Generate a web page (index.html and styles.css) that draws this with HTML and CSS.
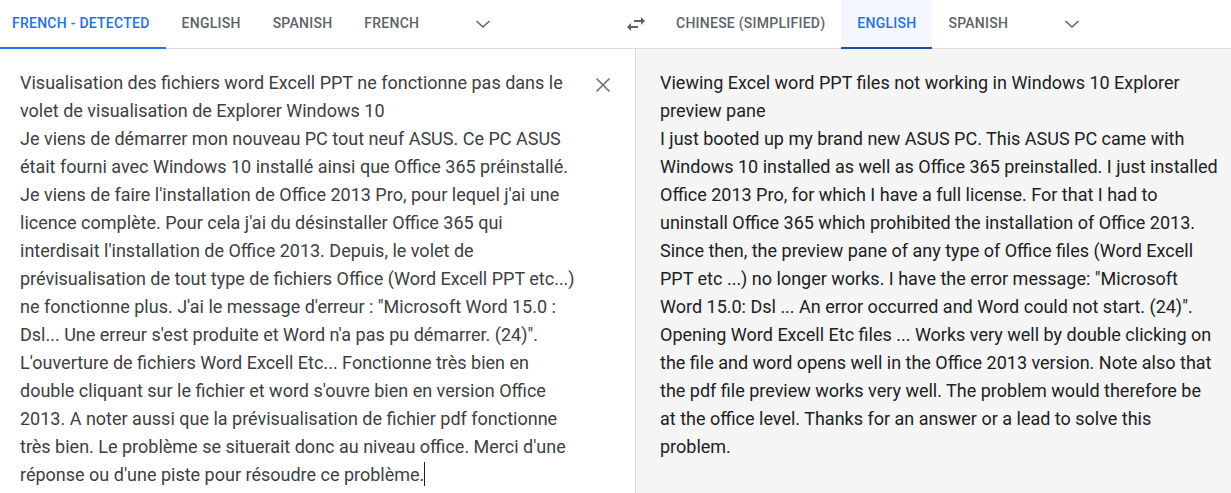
FILE: index.html
```html
<!DOCTYPE html>
<html lang="en">
<head>
    <meta charset="utf-8" />
    <title>Translate</title>
    <link rel="stylesheet" href="styles.css">
</head>
<body>
    <div class="header">
        <div class="tabs source">
            <a class="tab active first">French - detected</a>
            <a class="tab">English</a>
            <a class="tab">Spanish</a>
            <a class="tab">French</a>
            <span class="icon-btn more">
                <svg width="24" height="24" viewBox="0 0 24 24"><polyline points="5.5,9 12,15 18.5,9" fill="none" stroke="#5f6368" stroke-width="1.6"/></svg>
            </span>
        </div>
        <span class="icon-btn swap">
            <svg width="24" height="24" viewBox="0 0 24 24"><path d="M6.99 11L3 15l3.99 4v-3H14v-2H6.99v-3zM21 9l-4-4v3h-7v2h7v3l4-4z" fill="#5f6368"/></svg>
        </span>
        <div class="tabs target">
            <a class="tab">Chinese (Simplified)</a>
            <a class="tab active">English</a>
            <a class="tab">Spanish</a>
            <span class="icon-btn more">
                <svg width="24" height="24" viewBox="0 0 24 24"><polyline points="5.5,9 12,15 18.5,9" fill="none" stroke="#5f6368" stroke-width="1.6"/></svg>
            </span>
        </div>
    </div>

    <div class="panes">
        <div class="pane source-pane">
            <div class="text">Visualisation des fichiers word Excell PPT ne fonctionne pas dans le volet de visualisation de Explorer Windows 10<br>Je viens de démarrer mon nouveau PC tout neuf ASUS. Ce PC ASUS était fourni avec Windows 10 installé ainsi que Office 365 préinstallé. Je viens de faire l'installation de Office 2013 Pro, pour lequel j'ai une licence complète. Pour cela j'ai du désinstaller Office 365 qui interdisait l'installation de Office 2013. Depuis, le volet de prévisualisation de tout type de fichiers Office (Word Excell PPT etc...) ne fonctionne plus. J'ai le message d'erreur : "Microsoft Word 15.0 : Dsl... Une erreur s'est produite et Word n'a pas pu démarrer. (24)". L'ouverture de fichiers Word Excell Etc... Fonctionne très bien en double cliquant sur le fichier et word s'ouvre bien en version Office 2013. A noter aussi que la prévisualisation de fichier pdf fonctionne très bien. Le problème se situerait donc au niveau office. Merci d'une réponse ou d'une piste pour résoudre ce problème.<span class="caret"></span></div>
            <span class="clear">
                <svg width="16" height="16" viewBox="0 0 16 16"><path d="M1.5 1.5L14.5 14.5M14.5 1.5L1.5 14.5" stroke="#70757a" stroke-width="1.7"/></svg>
            </span>
        </div>
        <div class="pane target-pane">
            <div class="text">Viewing Excel word PPT files not working in Windows 10 Explorer preview pane<br>I just booted up my brand new ASUS PC. This ASUS PC came with Windows 10 installed as well as Office 365 preinstalled. I just installed Office 2013 Pro, for which I have a full license. For that I had to uninstall Office 365 which prohibited the installation of Office 2013. Since then, the preview pane of any type of Office files (Word Excell PPT etc ...) no longer works. I have the error message: "Microsoft Word 15.0: Dsl ... An error occurred and Word could not start. (24)". Opening Word Excell Etc files ... Works very well by double clicking on the file and word opens well in the Office 2013 version. Note also that the pdf file preview works very well. The problem would therefore be at the office level. Thanks for an answer or a lead to solve this problem.</div>
        </div>
    </div>
</body>
</html>
```

FILE: styles.css
```css
html, body {
    height: 100%;
}

body {
    margin: 0;
    font-family: Roboto, "Liberation Sans", Arial, sans-serif;
    display: flex;
    flex-direction: column;
    background: #fff;
}

.header {
    display: flex;
    height: 48px;
    border-bottom: 1px solid #dadce0;
}

.tabs {
    display: flex;
    align-items: stretch;
}

.tabs.source {
    width: 612px;
}

.tab {
    display: flex;
    align-items: center;
    padding: 0 16px 2px;
    font-size: 14px;
    font-weight: 500;
    letter-spacing: 0.25px;
    text-transform: uppercase;
    color: #5f6368;
    border-bottom: 2px solid transparent;
    margin-bottom: -1px;
    cursor: pointer;
}

.tab.first {
    padding-left: 12px;
}

.source .tab.active {
    color: #1a73e8;
    border-bottom-color: #1a73e8;
}

.target .tab.active {
    color: #1a73e8;
    background: #f4f8fe;
    border-bottom-color: #174ea6;
}

.icon-btn {
    width: 48px;
    display: flex;
    align-items: center;
    justify-content: center;
}

.icon-btn.more {
    margin-left: 24px;
}

.panes {
    flex: 1;
    display: flex;
}

.pane {
    display: flex;
    padding-top: 20px;
    font-size: 18px;
    line-height: 28px;
}

.source-pane {
    width: 635px;
    box-sizing: border-box;
    padding-left: 20px;
    padding-right: 8px;
    color: #3c4043;
}

.source-pane .text {
    flex: 1;
}

.caret {
    display: inline-block;
    width: 1px;
    height: 24px;
    background: #202124;
    vertical-align: -5px;
}

.clear {
    width: 48px;
    height: 28px;
    margin-top: 2px;
    display: flex;
    align-items: center;
    justify-content: center;
    flex: none;
}

.target-pane {
    flex: 1;
    border-left: 1px solid #dadce0;
    background: #f5f5f5;
    padding-left: 24px;
    padding-right: 10px;
    color: #202124;
}
```
